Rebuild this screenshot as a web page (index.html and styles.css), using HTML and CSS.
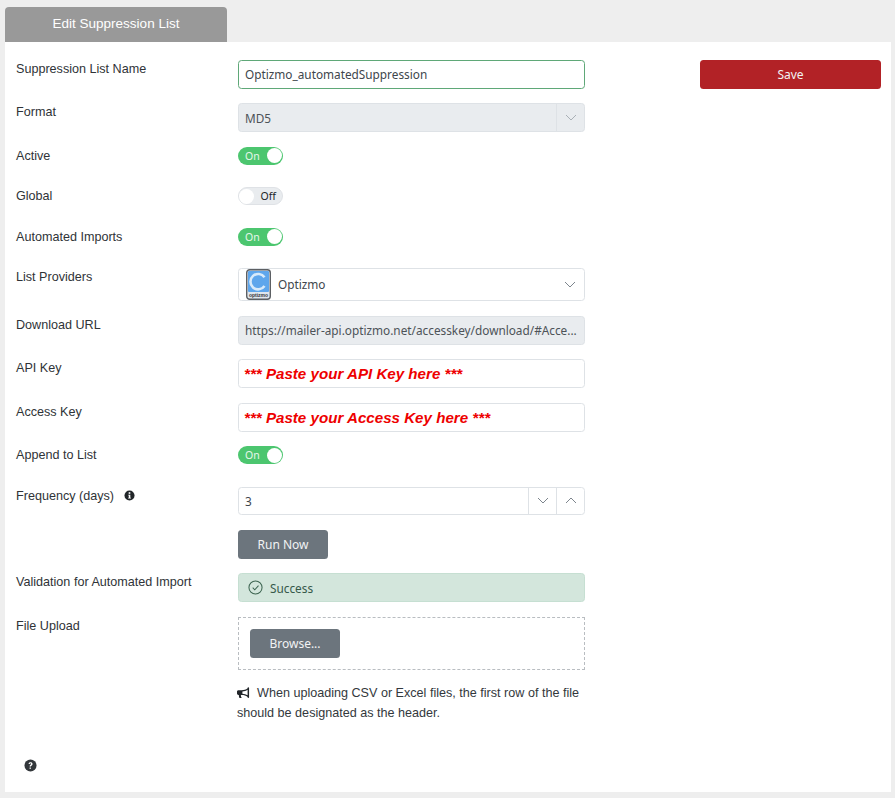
FILE: index.html
```html
<!DOCTYPE html>
<html lang="en">
<head>
<meta charset="utf-8">
<title>Edit Suppression List</title>
<link rel="stylesheet" href="styles.css">
</head>
<body>
<div class="tab">Edit Suppression List</div>
<main class="panel">
  <form class="form">
    <div class="row"><div class="label">Suppression List Name</div><div class="field focus">Optizmo_automatedSuppression</div></div>
    <div class="row"><div class="label">Format</div><div class="field disabled select"><span class="grow">MD5</span><span class="addon"><svg class="chev light" viewBox="0 0 12 7"><path d="M1 1l5 5 5-5"/></svg></span></div></div>
    <div class="row tall"><div class="label">Active</div><div class="switch on"><span class="txt">On</span><span class="knob"></span></div></div>
    <div class="row tall"><div class="label">Global</div><div class="switch off"><span class="knob"></span><span class="txt">Off</span></div></div>
    <div class="row tall"><div class="label">Automated Imports</div><div class="switch on"><span class="txt">On</span><span class="knob"></span></div></div>
    <div class="row list"><div class="label">List Providers</div><div class="field provider">
      <svg class="logo" viewBox="0 0 25 31"><rect x=".7" y=".7" width="23.6" height="29.6" rx="3" fill="#dfe6ee" stroke="#5c5f63" stroke-width="1.4"/><rect x="2" y="2" width="21" height="21" rx="1" fill="#5ea6ec"/><path d="M18.500 8.300A7.700 7.700 0 1 0 18.500 17" fill="none" stroke="#d8eafa" stroke-width="2.600"/><text x="12.500" y="28.300" class="logo-text">optizmo</text></svg>
      <span class="grow provider-name">Optizmo</span><svg class="chev" viewBox="0 0 12 7"><path d="M1 1l5 5 5-5"/></svg></div></div>
    <div class="row"><div class="label">Download URL</div><div class="field disabled"><span class="clip">https://mailer-api.optizmo.net/accesskey/download/#Acce...</span></div></div>
    <div class="row"><div class="label">API Key</div><div class="field paste">*** Paste your API Key here ***</div></div>
    <div class="row"><div class="label">Access Key</div><div class="field paste">*** Paste your Access Key here ***</div></div>
    <div class="row tall"><div class="label">Append to List</div><div class="switch on"><span class="txt">On</span><span class="knob"></span></div></div>
    <div class="row"><div class="label">Frequency (days)<svg class="info" viewBox="0 0 12 12"><circle cx="6" cy="6" r="5.5" fill="#212529"/><rect x="5.1" y="2.4" width="1.8" height="1.8" fill="#fff"/><path d="M4.6 5.1h2.3v3.4h.7v.9H4.5v-.9h.7V6H4.6z" fill="#fff"/></svg></div><div class="field spin"><span class="grow">3</span><span class="addon"><svg class="chev" viewBox="0 0 12 7"><path d="M1 1l5 5 5-5"/></svg></span><span class="addon"><svg class="chev" viewBox="0 0 12 7"><path d="M1 6l5-5 5 5"/></svg></span></div></div>
    <div class="row"><div class="label"></div><button type="button" class="btn">Run Now</button></div>
    <div class="row"><div class="label">Validation for Automated Import</div><div class="alert"><svg class="check" viewBox="0 0 16 16"><circle cx="8" cy="8" r="7"/><path d="M5 8.2l2.2 2.2L11.2 6"/></svg>Success</div></div>
    <div class="row upload-row"><div class="label">File Upload</div><div class="drop"><button type="button" class="btn">Browse...</button></div></div>
    <div class="row note-row"><div class="label"></div><p class="note"><svg class="horn" viewBox="0 0 14 12"><path d="M12.2 0c-.5 0-.8.3-.8.8v.3C9.600 2.700 7.600 3.200 5 3.200H1.500C.700 3.200 0 3.900 0 4.700v2.200c0 .8.700 1.500 1.500 1.500h.6c-.1.3-.1.500-.1.800 0 .9.300 1.700.700 2.400h2.500c-.6-.7-1-1.500-1-2.400 0-.3 0-.5.1-.8H5c2.600 0 4.600.500 6.400 2.100v.3c0 .5.300.8.800.8s.8-.3.800-.8V.8c0-.5-.3-.8-.8-.8zm-.8 8.800C9.800 7.700 8 7.100 5.800 7V4.600c2.200-.1 4-.7 5.600-1.800z" fill="#212529"/></svg>When uploading CSV or Excel files, the first row of the file should be designated as the header.</p></div>
    <svg class="help" viewBox="0 0 14 14"><circle cx="7" cy="7" r="6.500" fill="#33373b"/><path d="M4.900 5.400c.1-1.200 1-1.900 2.200-1.900s2.100.7 2.100 1.800c0 1.700-1.800 1.500-1.800 2.800H6c0-2 1.700-1.800 1.700-2.700 0-.4-.3-.7-.7-.7-.5 0-.7.300-.8.700z" fill="#fff"/><rect x="6" y="9.200" width="1.400" height="1.400" fill="#fff"/></svg>
  </form>
  <aside class="side"><button type="button" class="btn save">Save</button></aside>
</main>
</body>
</html>
```
FILE: styles.css
```css
* { box-sizing: border-box; }
html, body { height: 100%; }
body {
  margin: 0;
  padding: 7px 4px 6px 5px;
  height: 798px;
  overflow: hidden;
  background: #eeeeee;
  color: #212529;
  font-family: "Liberation Sans", Arial, sans-serif;
  font-size: 12.6px;
}
.tab {
  width: 222px;
  height: 35px;
  background: #999999;
  color: #fff;
  border-radius: 4px 4px 0 0;
  font-size: 13.5px;
  line-height: 34px;
  text-align: center;
}
.panel {
  display: flex;
  height: 750px;
  background: #fff;
  padding: 18px 10px 0 11px;
}
.form {
  width: 569px;
  display: flex;
  flex-direction: column;
  gap: 14.6px;
}
.side { margin-left: 115px; width: 181px; }
.row { display: flex; min-height: 28.8px; }
.tall { height: 25.8px; min-height: 25.8px; }
.list { min-height: 33.4px; height: 33.4px; }
.label {
  width: 222px;
  flex: none;
  line-height: 19px;
  color: #2f3337;
}
.field {
  width: 347px;
  height: 28.8px;
  display: flex;
  align-items: center;
  border: 1px solid #dee2e6;
  border-radius: 3.5px;
  padding: 0 6px;
  background: #fff;
  font-family: "Noto Sans", sans-serif;
  font-size: 11.8px;
  color: #40464c;
  white-space: nowrap;
  overflow: hidden;
}
.focus { border-color: #5fa878; }
.disabled { background: #e9ecef; color: #4d5358; }
.grow { flex: 1; }
.clip { display: block; width: 100%; }
.select, .spin { padding-right: 0; }
.addon {
  width: 28px;
  height: 100%;
  flex: none;
  display: flex;
  align-items: center;
  justify-content: center;
  border-left: 1px solid #dee2e6;
}
.chev { width: 12px; height: 7px; fill: none; stroke: #7d858d; stroke-width: 1; flex: none; }
.chev.light { stroke: #a9b0b6; }
.switch {
  width: 45px;
  height: 18px;
  border-radius: 9px;
  display: flex;
  align-items: center;
  justify-content: space-between;
  padding: 1.5px;
  font-family: "Noto Sans", sans-serif;
  font-size: 10.5px;
}
.switch.on { background: #4cc66f; color: #e6f7eb; padding-left: 7px; }
.switch.off { background: #e9ecef; color: #212529; padding: 0 6px 0 0; height: 18px; border: 1px solid #dfe2e6; }
.knob { width: 15px; height: 15px; border-radius: 50%; background: #fff; flex: none; }
.provider { height: 33.4px; padding: 0 8px 0 7px; }
.provider-name { padding-bottom: 2px; }
.logo { width: 25px; height: 31px; margin-right: 7px; flex: none; }
.logo-text {
  font-family: "Liberation Sans", Arial, sans-serif;
  font-size: 5px;
  font-weight: 700;
  fill: #34373a;
  text-anchor: middle;
}
.paste {
  padding-left: 5px;
  font-family: "Liberation Sans", Arial, sans-serif;
  font-size: 15.15px;
  font-weight: 700;
  font-style: italic;
  color: #ee0000;
}
.info { width: 11px; height: 11px; margin-left: 10px; vertical-align: -1.5px; }
.btn {
  width: 90px;
  height: 29px;
  border: 0;
  border-radius: 3.5px;
  background: #6c757d;
  color: #f2f3f4;
  font-family: "Noto Sans", sans-serif;
  font-size: 12px;
  padding: 0;
}
.save { width: 181px; background: #b22226; }
.alert {
  width: 347px;
  height: 28.8px;
  display: flex;
  align-items: center;
  background: #d3e6dc;
  border: 1px solid #c6dfd2;
  border-radius: 3.5px;
  padding-left: 9px;
  font-family: "Noto Sans", sans-serif;
  font-size: 11.8px;
  color: #36594a;
}
.check { width: 15px; height: 15px; margin-right: 7px; fill: none; stroke: #3c6450; stroke-width: 1.1; flex: none; }
.upload-row { min-height: 53px; }
.drop {
  width: 347px;
  height: 53px;
  border: 1px dashed #b9bdc1;
  padding: 11px;
}
.note {
  width: 348px;
  margin: -1px 0 0 -1px;
  font-size: 12.6px;
  line-height: 20px;
  color: #33383c;
}
.horn { width: 13px; height: 11.5px; margin-right: 7px; vertical-align: -1px; }
.help { width: 13px; height: 13px; margin: 21px 0 0 8px; flex: none; }
```
